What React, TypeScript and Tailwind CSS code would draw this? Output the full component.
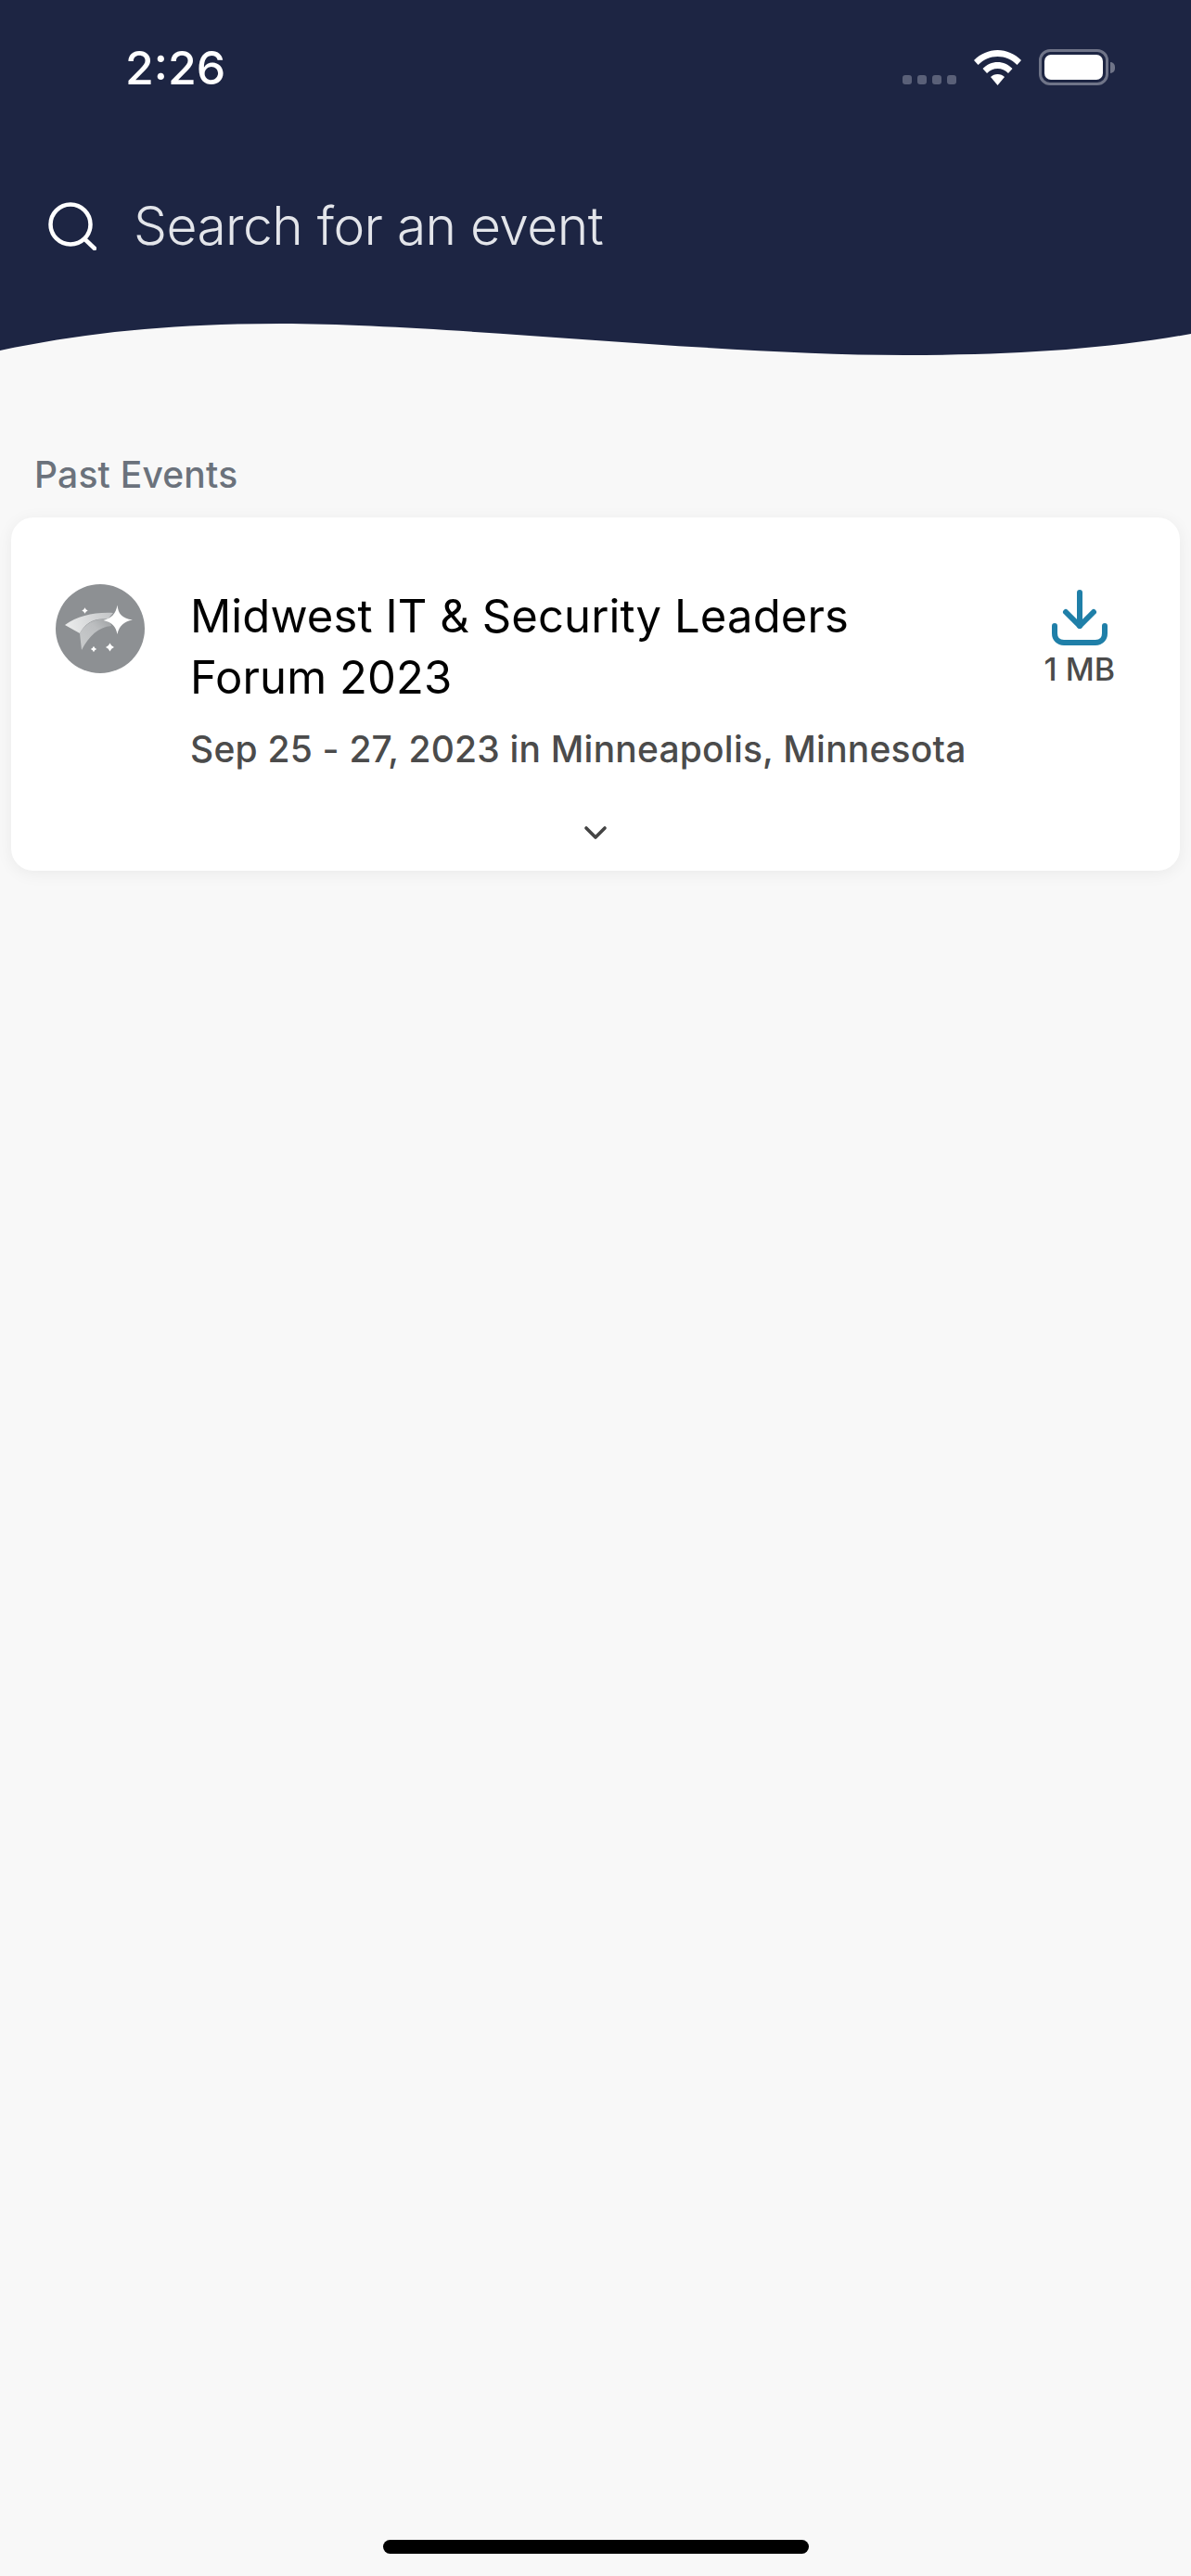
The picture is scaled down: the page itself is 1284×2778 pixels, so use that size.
import React from "react";
import { ChevronDown } from "lucide-react";

const NAVY = "#1d2543";

function Sparkle({ x, y, r }: { x: number; y: number; r: number }) {
  const k = r * 0.26;
  return (
    <path
      d={`M${x} ${y - r}Q${x + k} ${y - k} ${x + r} ${y}Q${x + k} ${y + k} ${x} ${y + r}Q${x - k} ${y + k} ${x - r} ${y}Q${x - k} ${y - k} ${x} ${y - r}Z`}
      fill="#fff"
    />
  );
}

function EventLogo() {
  return (
    <svg width="96" height="96" viewBox="0 0 96 96" className="shrink-0">
      <defs>
        <linearGradient id="upper" x1="10" y1="44" x2="62" y2="32" gradientUnits="userSpaceOnUse">
          <stop offset="0" stopColor="#eceded" />
          <stop offset="1" stopColor="#c3c5c7" />
        </linearGradient>
        <linearGradient id="lower" x1="28" y1="70" x2="60" y2="38" gradientUnits="userSpaceOnUse">
          <stop offset="0" stopColor="#c9cbcc" />
          <stop offset="0.6" stopColor="#bcbec0" />
          <stop offset="1" stopColor="#9ea1a3" />
        </linearGradient>
      </defs>
      <circle cx="48" cy="48" r="48" fill="#8d9093" />
      <path d="M10 44C24 34 42 30 62 31L56 38C42 36 32 42 26 53Z" fill="url(#upper)" />
      <path d="M26 53C32 42 44 36 58 38L60 45C46 46 36 56 28 71Z" fill="url(#lower)" />
      <path
        d="M66.5 22.5C67.5 32 71 36.5 83 38.5C73 40.5 68.5 45 66.5 54C65 46 61 41 51.5 39C60 36.5 65 32 66.5 22.5Z"
        fill="#fff"
      />
      <Sparkle x={31.5} y={28.5} r={3.2} />
      <Sparkle x={41} y={70} r={3.2} />
      <Sparkle x={58.5} y={68} r={4.5} />
    </svg>
  );
}

function DownloadIcon() {
  return (
    <svg width="60" height="60" viewBox="0 0 60 60" fill="none" stroke="#1f7fa8" strokeWidth="6" strokeLinecap="round" strokeLinejoin="round">
      <path d="M30 3V39" />
      <path d="M15 24L30 39L45 24" />
      <path d="M3 39V47C3 53 7 57 13 57H47C53 57 57 53 57 47V39" />
    </svg>
  );
}

function StatusBar() {
  return (
    <div className="flex h-[104px] items-start justify-between pl-[135px] pr-[82px] pt-[43px]">
      <span className="text-[50px] font-medium leading-[60px] text-white">2:26</span>
      <div className="flex items-end gap-[19px] pt-[10px]">
        <div className="mb-[1px] flex gap-[6px]">
          <span className="h-[10px] w-[10px] rounded-[3px] bg-[#5a6078]" />
          <span className="h-[10px] w-[10px] rounded-[3px] bg-[#5a6078]" />
          <span className="h-[10px] w-[10px] rounded-[3px] bg-[#5a6078]" />
          <span className="h-[10px] w-[10px] rounded-[3px] bg-[#5a6078]" />
        </div>
        <svg width="51" height="38" viewBox="0 0 51 38" fill="#fff">
          <path d="M25.5 0C35 0 44 4 51 11L46.5 16C40.5 10 33.5 7 25.5 7C17.5 7 10.5 10 4.5 16L0 11C7 4 16 0 25.5 0Z" />
          <path d="M25.5 13C31.5 13 37 15.5 41.5 20L37 25C33.5 21.5 30 20 25.5 20C21 20 17.5 21.5 14 25L9.5 20C14 15.5 19.5 13 25.5 13Z" />
          <path d="M25.5 26C28.5 26 31 27 33 29L25.5 38L18 29C20 27 22.5 26 25.5 26Z" />
        </svg>
        <div className="flex items-center">
          <div className="h-[39px] w-[75px] rounded-[12px] border-[3px] border-[#6f7488] p-[3px]">
            <div className="h-full w-full rounded-[7px] bg-white" />
          </div>
          <div className="ml-[2px] h-[12px] w-[5px] rounded-r-full bg-[#6f7488]" />
        </div>
      </div>
    </div>
  );
}

function Header() {
  return (
    <header>
      <div style={{ background: NAVY }} className="h-[345px]">
        <StatusBar />
        <div className="flex items-center pl-[52px] pt-[106px]">
          <svg width="52" height="52" viewBox="0 0 52 52" fill="none" stroke="#fff" strokeWidth="4.5" strokeLinecap="round">
            <circle cx="24" cy="24" r="21.5" />
            <path d="M39.5 40L50 50" />
          </svg>
          <span className="ml-[40px] text-[57px] font-[350] leading-[68px] tracking-[-0.6px] text-[#e3e5ea]">Search for an event</span>
        </div>
      </div>
      {/* wave under the header */}
      <svg width="1284" height="42" viewBox="0 0 1284 42" className="block">
        <path
          d="M0 33C95 13 190 4 303 4C480 4 770 38 975 38C1090 38 1190 32 1284 15V0H0Z"
          fill={NAVY}
        />
      </svg>
    </header>
  );
}

function EventCard() {
  return (
    <div className="mx-[12px] h-[381px] rounded-[24px] bg-white shadow-[0_3px_18px_rgba(0,0,0,0.06)]">
      <div className="flex pl-[48px] pr-[70px] pt-[72px]">
        <EventLogo />
        <div className="ml-[49px] flex-1">
          <h3 className="mt-[2px] w-[760px] text-[49px] font-normal leading-[66px] tracking-[0.1px] text-black">
            Midwest IT &amp; Security Leaders Forum 2023
          </h3>
          <p className="mt-[21px] whitespace-nowrap text-[39px] font-medium leading-[46px] tracking-[0.2px] text-[#4b4b4b]">
            Sep 25 - 27, 2023 in Minneapolis, Minnesota
          </p>
        </div>
        <div className="mt-[6px] flex flex-col items-center">
          <DownloadIcon />
          <span className="mt-[8px] whitespace-nowrap text-[34px] font-medium leading-[36px] text-[#4b4b4b]">1 MB</span>
        </div>
      </div>
      <div className="mt-[47px] flex justify-center">
        <ChevronDown size={40} strokeWidth={2.2} color="#444" />
      </div>
    </div>
  );
}

export default function App() {
  return (
    <div className="flex h-[2778px] w-[1284px] flex-col overflow-hidden bg-[#f8f8f8] font-['Inter',sans-serif]">
      <Header />
      <main className="flex-1">
        <h2 className="pl-[37px] pt-[102px] text-[39px] font-medium leading-[46px] tracking-[0.2px] text-[#6b727c]">Past Events</h2>
        <div className="mt-[23px]">
          <EventCard />
        </div>
      </main>
      <div className="flex justify-center pb-[24px]">
        <div className="h-[15px] w-[459px] rounded-full bg-black" />
      </div>
    </div>
  );
}
